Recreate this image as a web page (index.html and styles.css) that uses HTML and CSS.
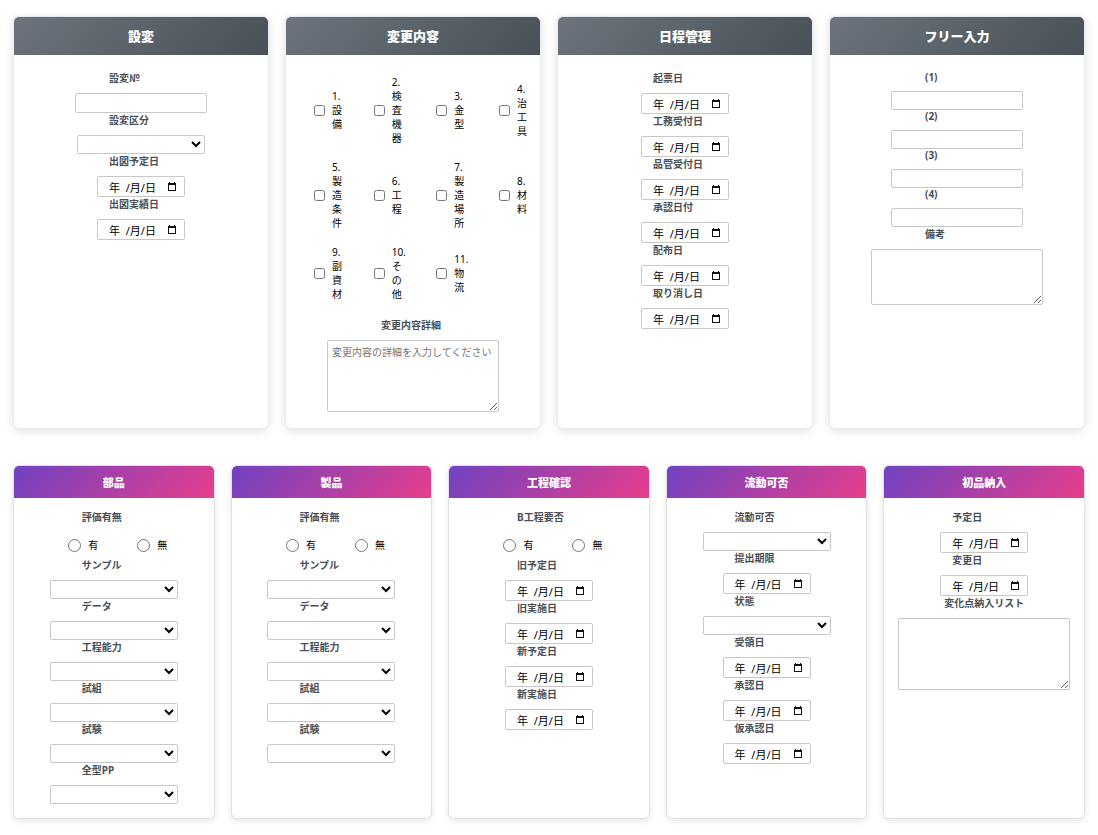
FILE: index.html
```html
<!DOCTYPE html>
<html lang="ja">
<head>
<meta charset="utf-8">
<meta name="viewport" content="width=device-width, initial-scale=1">
<title>設変管理</title>
<link rel="stylesheet" href="styles.css">
</head>
<body>
<svg class="sprite" aria-hidden="true">
  <symbol id="calendar" viewBox="0 0 8 9"><path d="M1 0h1v1h4V0h1v1h1v8H0V1h1zM1 3v5h6V3z" fill="#111" fill-rule="evenodd"/></symbol>
</svg>
<div class="previous-panel"></div>
<main class="page">
  <div class="row row-top">
    <section class="card">
      <h2 class="card-title">設変</h2>
      <div class="card-body">
        <label class="caption wide-sign" for="no">設変№</label>
        <input class="field text" id="no" type="text">
        <label class="caption" for="kubun">設変区分</label>
        <select class="field select" id="kubun"><option></option></select>
        <label class="caption" for="d1">出図予定日</label>
        <div class="field date"><input id="d1" type="text" value="年&nbsp; /月/日"><button type="button" aria-label="カレンダー"><svg><use href="#calendar"/></svg></button></div>
        <label class="caption" for="d2">出図実績日</label>
        <div class="field date"><input id="d2" type="text" value="年&nbsp; /月/日"><button type="button" aria-label="カレンダー"><svg><use href="#calendar"/></svg></button></div>
      </div>
    </section>
    <section class="card">
      <h2 class="card-title">変更内容</h2>
      <div class="card-body">
        <div class="checks">
          <label class="check"><input type="checkbox"><span>1.設備</span></label>
          <label class="check"><input type="checkbox"><span>2.検査機器</span></label>
          <label class="check"><input type="checkbox"><span>3.金型</span></label>
          <label class="check"><input type="checkbox"><span>4.治工具</span></label>
          <label class="check"><input type="checkbox"><span>5.製造条件</span></label>
          <label class="check"><input type="checkbox"><span>6.工程</span></label>
          <label class="check"><input type="checkbox"><span>7.製造場所</span></label>
          <label class="check"><input type="checkbox"><span>8.材料</span></label>
          <label class="check"><input type="checkbox"><span>9.副資材</span></label>
          <label class="check"><input type="checkbox"><span>10.その他</span></label>
          <label class="check"><input type="checkbox"><span>11.物流</span></label>
        </div>
        <label class="caption" for="detail">変更内容詳細</label>
        <textarea class="field area" id="detail" placeholder="変更内容の詳細を入力してください"></textarea>
      </div>
    </section>
    <section class="card">
      <h2 class="card-title">日程管理</h2>
      <div class="card-body">
        <label class="caption" for="d3">起票日</label>
        <div class="field date"><input id="d3" type="text" value="年&nbsp; /月/日"><button type="button" aria-label="カレンダー"><svg><use href="#calendar"/></svg></button></div>
        <label class="caption" for="d4">工務受付日</label>
        <div class="field date"><input id="d4" type="text" value="年&nbsp; /月/日"><button type="button" aria-label="カレンダー"><svg><use href="#calendar"/></svg></button></div>
        <label class="caption" for="d5">品管受付日</label>
        <div class="field date"><input id="d5" type="text" value="年&nbsp; /月/日"><button type="button" aria-label="カレンダー"><svg><use href="#calendar"/></svg></button></div>
        <label class="caption" for="d6">承認日付</label>
        <div class="field date"><input id="d6" type="text" value="年&nbsp; /月/日"><button type="button" aria-label="カレンダー"><svg><use href="#calendar"/></svg></button></div>
        <label class="caption" for="d7">配布日</label>
        <div class="field date"><input id="d7" type="text" value="年&nbsp; /月/日"><button type="button" aria-label="カレンダー"><svg><use href="#calendar"/></svg></button></div>
        <label class="caption" for="d8">取り消し日</label>
        <div class="field date"><input id="d8" type="text" value="年&nbsp; /月/日"><button type="button" aria-label="カレンダー"><svg><use href="#calendar"/></svg></button></div>
      </div>
    </section>
    <section class="card">
      <h2 class="card-title">フリー入力</h2>
      <div class="card-body">
        <label class="caption latin" for="f1">(1)</label>
        <input class="field text" id="f1" type="text">
        <label class="caption latin" for="f2">(2)</label>
        <input class="field text" id="f2" type="text">
        <label class="caption latin" for="f3">(3)</label>
        <input class="field text" id="f3" type="text">
        <label class="caption latin" for="f4">(4)</label>
        <input class="field text" id="f4" type="text">
        <label class="caption" for="biko">備考</label>
        <textarea class="field area short" id="biko"></textarea>
      </div>
    </section>
  </div>

  <div class="row row-bottom">
    <section class="card">
      <h2 class="card-title">部品</h2>
      <div class="card-body">
        <span class="caption" id="g1">評価有無</span>
        <div class="radios" role="radiogroup" aria-labelledby="g1">
          <label class="radio"><input type="radio" name="r1"><span>有</span></label>
          <label class="radio"><input type="radio" name="r1"><span>無</span></label>
        </div>
        <label class="caption" for="p1">サンプル</label>
        <select class="field select" id="p1"><option></option></select>
        <label class="caption" for="p2">データ</label>
        <select class="field select" id="p2"><option></option></select>
        <label class="caption" for="p3">工程能力</label>
        <select class="field select" id="p3"><option></option></select>
        <label class="caption" for="p4">試組</label>
        <select class="field select" id="p4"><option></option></select>
        <label class="caption" for="p5">試験</label>
        <select class="field select" id="p5"><option></option></select>
        <label class="caption" for="p6">全型PP</label>
        <select class="field select" id="p6"><option></option></select>
      </div>
    </section>
    <section class="card">
      <h2 class="card-title">製品</h2>
      <div class="card-body">
        <span class="caption" id="g2">評価有無</span>
        <div class="radios" role="radiogroup" aria-labelledby="g2">
          <label class="radio"><input type="radio" name="r2"><span>有</span></label>
          <label class="radio"><input type="radio" name="r2"><span>無</span></label>
        </div>
        <label class="caption" for="s1">サンプル</label>
        <select class="field select" id="s1"><option></option></select>
        <label class="caption" for="s2">データ</label>
        <select class="field select" id="s2"><option></option></select>
        <label class="caption" for="s3">工程能力</label>
        <select class="field select" id="s3"><option></option></select>
        <label class="caption" for="s4">試組</label>
        <select class="field select" id="s4"><option></option></select>
        <label class="caption" for="s5">試験</label>
        <select class="field select" id="s5"><option></option></select>
      </div>
    </section>
    <section class="card">
      <h2 class="card-title">工程確認</h2>
      <div class="card-body">
        <span class="caption" id="g3">B工程要否</span>
        <div class="radios" role="radiogroup" aria-labelledby="g3">
          <label class="radio"><input type="radio" name="r3"><span>有</span></label>
          <label class="radio"><input type="radio" name="r3"><span>無</span></label>
        </div>
        <label class="caption" for="k1">旧予定日</label>
        <div class="field date"><input id="k1" type="text" value="年&nbsp; /月/日"><button type="button" aria-label="カレンダー"><svg><use href="#calendar"/></svg></button></div>
        <label class="caption" for="k2">旧実施日</label>
        <div class="field date"><input id="k2" type="text" value="年&nbsp; /月/日"><button type="button" aria-label="カレンダー"><svg><use href="#calendar"/></svg></button></div>
        <label class="caption" for="k3">新予定日</label>
        <div class="field date"><input id="k3" type="text" value="年&nbsp; /月/日"><button type="button" aria-label="カレンダー"><svg><use href="#calendar"/></svg></button></div>
        <label class="caption" for="k4">新実施日</label>
        <div class="field date"><input id="k4" type="text" value="年&nbsp; /月/日"><button type="button" aria-label="カレンダー"><svg><use href="#calendar"/></svg></button></div>
      </div>
    </section>
    <section class="card">
      <h2 class="card-title">流動可否</h2>
      <div class="card-body">
        <label class="caption" for="r1">流動可否</label>
        <select class="field select" id="r1"><option></option></select>
        <label class="caption" for="r2">提出期限</label>
        <div class="field date"><input id="r2" type="text" value="年&nbsp; /月/日"><button type="button" aria-label="カレンダー"><svg><use href="#calendar"/></svg></button></div>
        <label class="caption" for="r3">状態</label>
        <select class="field select" id="r3"><option></option></select>
        <label class="caption" for="r4">受領日</label>
        <div class="field date"><input id="r4" type="text" value="年&nbsp; /月/日"><button type="button" aria-label="カレンダー"><svg><use href="#calendar"/></svg></button></div>
        <label class="caption" for="r5">承認日</label>
        <div class="field date"><input id="r5" type="text" value="年&nbsp; /月/日"><button type="button" aria-label="カレンダー"><svg><use href="#calendar"/></svg></button></div>
        <label class="caption" for="r6">仮承認日</label>
        <div class="field date"><input id="r6" type="text" value="年&nbsp; /月/日"><button type="button" aria-label="カレンダー"><svg><use href="#calendar"/></svg></button></div>
      </div>
    </section>
    <section class="card">
      <h2 class="card-title">初品納入</h2>
      <div class="card-body">
        <label class="caption" for="n1">予定日</label>
        <div class="field date"><input id="n1" type="text" value="年&nbsp; /月/日"><button type="button" aria-label="カレンダー"><svg><use href="#calendar"/></svg></button></div>
        <label class="caption" for="n2">変更日</label>
        <div class="field date"><input id="n2" type="text" value="年&nbsp; /月/日"><button type="button" aria-label="カレンダー"><svg><use href="#calendar"/></svg></button></div>
        <label class="caption" for="n3">変化点納入リスト</label>
        <textarea class="field area" id="n3"></textarea>
      </div>
    </section>
  </div>
</main>
</body>
</html>
```
FILE: styles.css
```css
* {
  box-sizing: border-box;
}

body {
  margin: 0;
  background: #fff;
  color: #000;
  font-family: "Noto Sans", "Noto Sans CJK JP", sans-serif;
  font-size: 10px;
  line-height: 14px;
}

.sprite {
  display: none;
}

/* bottom edge of the panel that precedes the cards */
.previous-panel {
  height: 0;
  margin: 0 13px;
  box-shadow: 0 0 6px rgba(0, 0, 0, 0.08);
}

.page {
  display: flex;
  flex-direction: column;
  gap: 36px;
  padding: 16px 13px;
}

.row {
  display: grid;
  gap: 16px;
}

.row-top {
  grid-template-columns: repeat(4, minmax(0, 1fr));
}

.row-bottom {
  grid-template-columns: repeat(5, minmax(0, 1fr));
}

.card {
  overflow: hidden;
  background: #fff;
  border: 1px solid #e9ecef;
  border-radius: 6px;
  box-shadow: 0 2px 10px rgba(0, 0, 0, 0.12);
}

.row-bottom .card {
  border-color: #dee2e6;
  box-shadow: 0 2px 6px rgba(0, 0, 0, 0.1);
}

.card-title {
  margin: 0;
  padding: 10px;
  background: linear-gradient(135deg, #6c757d, #495057);
  color: #fff;
  font-family: "Noto Sans CJK JP", "Noto Sans", sans-serif;
  font-size: 13px;
  font-weight: 900;
  line-height: 18px;
  text-align: center;
}

.row-bottom .card-title {
  padding: 8px;
  background: linear-gradient(135deg, #6f42c1, #e83e8c);
  font-size: 11px;
  line-height: 16px;
}

.card-body {
  display: flex;
  flex-direction: column;
  align-items: center;
  padding: 16px 0;
}

.row-bottom .card-body {
  padding: 12px 0 14px;
}

.caption {
  min-width: 64px;
  margin-bottom: 8px;
  color: #495057;
  font-weight: 700;
}

.wide-sign {
  font-family: "Noto Sans CJK JP", sans-serif;
}

.latin {
  line-height: 12px;
}

.field {
  margin: 0;
  background: #fff;
  border: 1px solid #c8c8c8;
  border-radius: 2px;
  color: #000;
  font-family: inherit;
  font-size: 10px;
}

.text {
  width: 132px;
  height: 20px;
  padding: 2px 4px;
}

.latin + .text {
  height: 19px;
}

.select {
  width: 128px;
  height: 19px;
}

.date {
  display: flex;
  align-items: center;
  width: 88px;
  height: 21px;
  padding: 0 8px 0 11px;
}

.date input {
  flex: 1;
  min-width: 0;
  padding: 0;
  background: none;
  border: 0;
  font-family: inherit;
  font-size: 11px;
}

.date button {
  display: flex;
  padding: 0;
  background: none;
  border: 0;
}

.date svg {
  width: 8px;
  height: 9px;
}

.area {
  width: 172px;
  height: 72px;
  padding: 4px;
  line-height: 14px;
}

.area.short {
  height: 56px;
}

.area::placeholder {
  color: #757575;
}

.checks {
  display: grid;
  grid-template-columns: 60fr 63fr 63fr 27fr;
  row-gap: 15px;
  align-self: stretch;
  padding: 4px 13px 17px 28px;
}

.check {
  display: flex;
  align-items: center;
  gap: 7px;
}

.check input {
  flex: none;
  width: 11px;
  height: 11px;
  margin: 0;
}

.check span {
  width: min-content;
}

.radios {
  display: flex;
  align-items: center;
  gap: 39px;
  height: 26px;
  padding-left: 8px;
}

.radio {
  display: flex;
  align-items: center;
  gap: 7px;
}

.radio input {
  width: 13px;
  height: 13px;
  margin: 0;
}
```
